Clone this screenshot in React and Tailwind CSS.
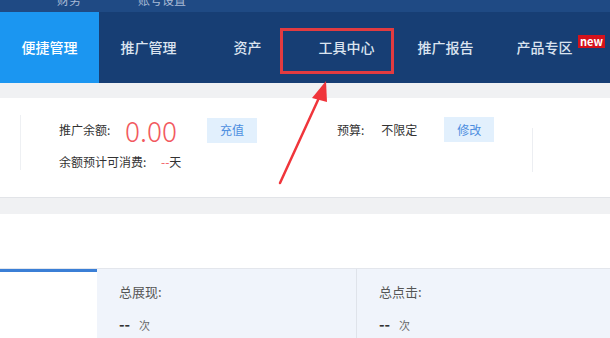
import React from 'react'

const font = { fontFamily: '"Noto Sans CJK SC", "Noto Sans", sans-serif' }

function Tab({ label, active, badge }) {
  return (
    <div className={`relative w-[99px] h-full flex items-center justify-center text-[14px] font-medium ${active ? 'bg-[#1b96f1] text-white' : 'text-[#dbe4f0]'}`}>
      <span>{label}</span>
      {badge && (
        <span className="absolute left-[83px] top-[23px] bg-[#d4121c] text-white text-[11px] font-bold leading-[13px] px-[2px]">new</span>
      )}
    </div>
  )
}

export default function App() {
  return (
    <div className="relative w-[610px] h-[338px] overflow-hidden bg-[#f0f1f3]" style={font}>
      {/* top strip, cut off */}
      <div className="h-[12px] overflow-hidden bg-[#1f4a84] text-[#a9bbd6] text-[12px]">
        <div className="flex -mt-[9px]">
          <span className="ml-[57px]">财务</span>
          <span className="ml-[57px]">账号设置</span>
        </div>
      </div>

      {/* nav */}
      <div className="flex h-[71px] bg-[#173e74]">
        <Tab label="便捷管理" active />
        <Tab label="推广管理" />
        <Tab label="资产" />
        <Tab label="工具中心" />
        <Tab label="推广报告" />
        <Tab label="产品专区" badge />
      </div>

      {/* balance card */}
      <div className="mt-[15px] h-[100px] bg-white border-b border-[#e2e4e8] flex items-start">
        <div className="w-px h-[55px] mt-[17px] ml-[20px] bg-[#eef0f3]" />
        <div className="ml-[38px] pt-[19px]">
          <div className="flex items-center h-[26px]">
            <span className="text-[12px] text-[#333] w-[66px]">推广余额:</span>
            <span className="text-[28px] leading-none text-[#f25a60] font-light">0.00</span>
            <button className="ml-[30px] w-[50px] h-[25px] bg-[#e2f0fd] text-[#4d8ee0] text-[12px]">充值</button>
          </div>
          <div className="flex items-center mt-[10px] text-[12px] text-[#333]">
            <span className="w-[102px]">余额预计可消费:</span>
            <span className="text-[#f25a60]">--</span>
            <span>天</span>
          </div>
        </div>
        <div className="ml-[80px] pt-[19px] flex items-center h-[44px]">
          <span className="text-[12px] text-[#333]">预算:</span>
          <span className="ml-[17px] text-[12px] text-[#333]">不限定</span>
          <button className="ml-[27px] w-[50px] h-[25px] bg-[#e2f0fd] text-[#4d8ee0] text-[12px]">修改</button>
        </div>
        <div className="w-px h-[44px] mt-[30px] ml-[38px] bg-[#eceef2]" />
      </div>

      {/* empty white block */}
      <div className="mt-[16px] h-[55px] bg-white border-b border-[#e3e6ec]" />

      {/* stats */}
      <div className="flex h-[70px]">
        <div className="w-[97px] bg-white border-t-[3px] border-[#3b7fd6]" />
        <div className="flex-1 flex bg-[#f0f4fb]">
          <div className="w-[260px] border-r border-[#dfe3ea] pl-[22px] pt-[13px]">
            <div className="text-[13px] text-[#555]">总展现:</div>
            <div className="mt-[11px] flex items-baseline gap-[9px]">
              <span className="text-[15px] font-bold text-[#333]">--</span>
              <span className="text-[11px] text-[#666]">次</span>
            </div>
          </div>
          <div className="pl-[22px] pt-[13px]">
            <div className="text-[13px] text-[#555]">总点击:</div>
            <div className="mt-[11px] flex items-baseline gap-[9px]">
              <span className="text-[15px] font-bold text-[#333]">--</span>
              <span className="text-[11px] text-[#666]">次</span>
            </div>
          </div>
        </div>
      </div>

      {/* annotation: red box */}
      <div className="absolute left-[280px] top-[28px] w-[114px] h-[46px] border-[3px] border-[#e23b40]" />

      {/* annotation: arrow */}
      <svg className="absolute left-0 top-0" width="610" height="338" viewBox="0 0 610 338">
        <line x1="280" y1="183" x2="318" y2="100" stroke="#f0353b" strokeWidth="2.5" strokeLinecap="round" />
        <polygon points="326,81 312,98 327,102" fill="#f0353b" />
      </svg>
    </div>
  )
}
